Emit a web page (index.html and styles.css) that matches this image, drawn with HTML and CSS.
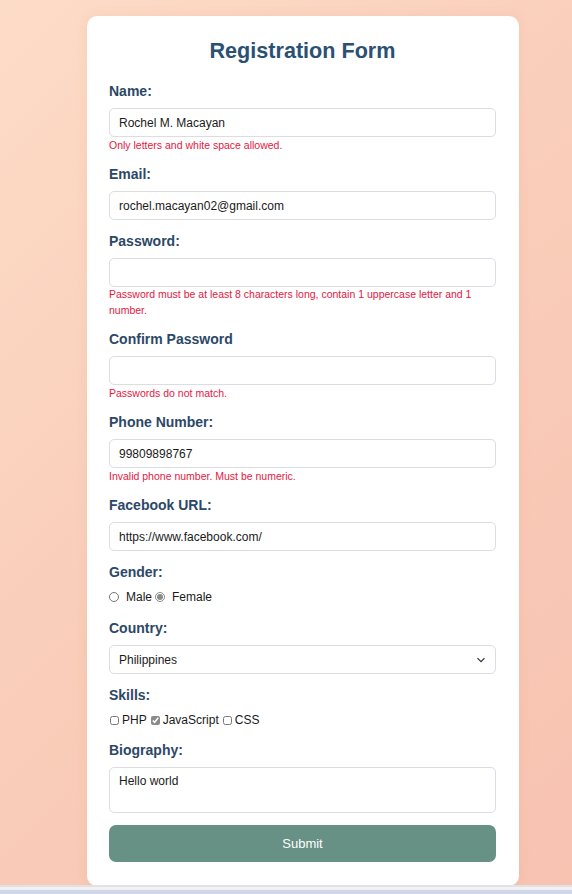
FILE: index.html
```html
<!DOCTYPE html>
<html lang="en">
<head>
<meta charset="utf-8">
<title>Registration Form</title>
<link rel="stylesheet" href="styles.css">
</head>
<body>
<div class="page">
  <form class="card">
    <h2 class="title">Registration Form</h2>

    <div class="group">
      <label class="label">Name:</label>
      <input class="field" type="text" value="Rochel M. Macayan">
      <div class="error">Only letters and white space allowed.</div>
    </div>

    <div class="group">
      <label class="label">Email:</label>
      <input class="field" type="text" value="rochel.macayan02@gmail.com">
    </div>

    <div class="group">
      <label class="label">Password:</label>
      <input class="field" type="password" value="">
      <div class="error error-multi">Password must be at least 8 characters long, contain 1 uppercase letter and 1 number.</div>
    </div>

    <div class="group">
      <label class="label">Confirm Password</label>
      <input class="field" type="password" value="">
      <div class="error">Passwords do not match.</div>
    </div>

    <div class="group">
      <label class="label">Phone Number:</label>
      <input class="field" type="text" value="99809898767">
      <div class="error">Invalid phone number. Must be numeric.</div>
    </div>

    <div class="group">
      <label class="label">Facebook URL:</label>
      <input class="field" type="text" value="https://www.facebook.com/">
    </div>

    <div class="group group-choice">
      <label class="label">Gender:</label>
      <div class="choices">
        <input class="radio" type="radio" name="g"><span class="opt">Male</span><input class="radio" type="radio" name="g" checked><span class="opt">Female</span>
      </div>
    </div>

    <div class="group">
      <label class="label">Country:</label>
      <div class="select-wrap">
        <select class="field select">
          <option>Philippines</option>
        </select>
        <svg class="chev" width="10" height="6" viewBox="0 0 10 6"><path d="M1.5 1.2l3.5 3.5 3.5-3.5" fill="none" stroke="#333" stroke-width="1.2"/></svg>
      </div>
    </div>

    <div class="group group-choice2">
      <label class="label">Skills:</label>
      <div class="choices">
        <input class="check" type="checkbox"><span class="opt">PHP</span><input class="check" type="checkbox" checked><span class="opt">JavaScript</span><input class="check" type="checkbox"><span class="opt">CSS</span>
      </div>
    </div>

    <div class="group">
      <label class="label">Biography:</label>
      <textarea class="field area">Hello world</textarea>
    </div>

    <button class="submit" type="button">Submit</button>
  </form>
</div>
<div class="strip"></div>
</body>
</html>
```
FILE: styles.css
```css
html, body {
  margin: 0;
  padding: 0;
}
body {
  font-family: "Liberation Sans", Arial, sans-serif;
  background: linear-gradient(135deg, #fddcc7 0%, #f9cdb9 50%, #f8c2b1 100%);
  min-height: 894px;
  overflow: hidden;
}
.page {
  display: flex;
  padding-top: 16px;
  padding-left: 87px;
}
.card {
  width: 432px;
  box-sizing: border-box;
  background: #fff;
  border-radius: 10px;
  padding: 18px 23px 24px 22px;
  box-shadow: 0 0 12px rgba(200, 120, 100, 0.12);
}
.title {
  margin: 0 0 15px;
  text-align: center;
  font-size: 21.6px;
  line-height: 34px;
  font-weight: bold;
  color: #2a5074;
}
.group {
  margin-bottom: 13px;
}
.label {
  display: block;
  font-size: 14px;
  line-height: 16px;
  font-weight: bold;
  color: #2c4866;
  margin-bottom: 9px;
}
.field {
  display: block;
  width: 100%;
  box-sizing: border-box;
  height: 29px;
  padding: 6px 9px;
  border: 1px solid #dcdde3;
  border-radius: 5px;
  font-family: "Liberation Sans", Arial, sans-serif;
  font-size: 12px;
  color: #1a1a1a;
  background: #fff;
  outline: none;
}
.select-wrap {
  position: relative;
}
.select {
  appearance: none;
  -webkit-appearance: none;
  padding: 4px 9px;
}
.chev {
  position: absolute;
  right: 10px;
  top: 12px;
}
.area {
  height: 46px;
  resize: none;
  padding: 6px 9px;
  line-height: 15px;
}
.error {
  font-size: 10.5px;
  line-height: 16px;
  color: #e5173f;
}
.error-multi {
  line-height: 15.5px;
}
.choices {
  display: flex;
  align-items: center;
  height: 16px;
  font-size: 12px;
  color: #1a1a1a;
}
.group-choice .choices {
  padding-bottom: 2px;
}
.group-choice2 .choices {
  padding-bottom: 1px;
}
.radio {
  width: 10px;
  height: 10px;
  margin: 0 7px 0 0;
  accent-color: #8b8b8b;
}
.check {
  width: 9px;
  height: 9px;
  margin: 0 3px 0 1px;
  accent-color: #8b8b8b;
}
.opt {
  margin-right: 3px;
}
.submit {
  display: block;
  width: 100%;
  height: 37px;
  margin-top: -1px;
  border: none;
  border-radius: 7px;
  background: #669184;
  color: #fff;
  font-family: "Liberation Sans", Arial, sans-serif;
  font-size: 13px;
  font-weight: 500;
}
.strip {
  position: fixed;
  left: 0;
  right: 0;
  bottom: 0;
  height: 9px;
  background: linear-gradient(#e2e2e2 0, #e2e2e2 2px, #f2f2f2 2px, #f2f2f2 5px, #cfd6ea 5px);
}
```
